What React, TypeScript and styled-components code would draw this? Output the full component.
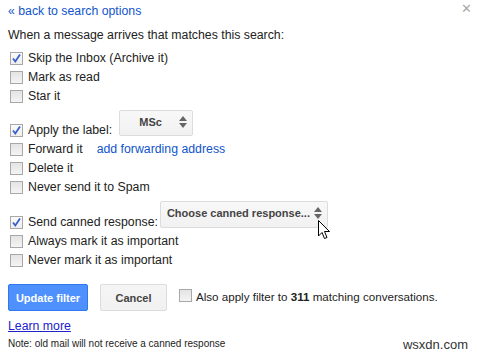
import React from 'react'
import styled, { createGlobalStyle } from 'styled-components'

const GlobalStyle = createGlobalStyle`
  html, body {
    margin: 0;
    padding: 0;
    background: #fff;
  }
  body {
    font-family: "Liberation Sans", Arial, sans-serif;
    font-size: 12.3px;
    color: #222;
  }
`

const Panel = styled.div`
  position: relative;
  width: 480px;
  height: 356px;
  padding: 0 8px;
  box-sizing: border-box;
  overflow: hidden;
`

const Close = styled.div`
  position: absolute;
  top: 2px;
  right: 8px;
  font-size: 13px;
  color: #aaa;
  line-height: 13px;
`

const BackLink = styled.a`
  display: block;
  color: #1155cc;
  text-decoration: none;
  line-height: 19px;
  margin-top: 2px;
`

const Intro = styled.div`
  line-height: 19px;
  margin-top: 5px;
  margin-bottom: 4px;
`

const Row = styled.div<{ $tall?: number }>`
  display: flex;
  align-items: flex-end;
  height: ${p => p.$tall || 19}px;
  line-height: 19px;
  white-space: nowrap;
`

const Box = styled.span<{ $checked?: boolean }>`
  position: relative;
  width: 11px;
  height: 11px;
  border: 1px solid #a8a8a8;
  background: ${p => (p.$checked ? 'linear-gradient(#fafafa, #eee)' : 'linear-gradient(#e4e4e4, #f4f4f4)')};
  margin: 0 5px 3px 2px;
  flex: none;
`

const Tick = styled.svg`
  position: absolute;
  left: 0;
  top: 0;
`

const Label = styled.span``

const Link = styled.a`
  color: #1155cc;
  text-decoration: none;
  margin-left: 14px;
`

const Select = styled.div<{ $w: number; $h: number; $mb: number; $ml: number }>`
  position: relative;
  width: ${p => p.$w}px;
  height: ${p => p.$h}px;
  margin-left: ${p => p.$ml}px;
  margin-bottom: ${p => p.$mb}px;
  box-sizing: border-box;
  border: 1px solid #dcdcdc;
  border-radius: 2px;
  background: linear-gradient(#f8f8f8, #f1f1f1);
  font-size: 11px;
  font-weight: bold;
  color: #444;
  line-height: 11px;
  white-space: nowrap;
  display: flex;
  align-items: flex-start;
`

const SelectText = styled.span<{ $center?: boolean }>`
  flex: 1;
  padding: 6px 0 0 6px;
  text-align: ${p => (p.$center ? 'center' : 'left')};
`

const Arrows = styled.svg`
  flex: none;
  margin: 5px 5px 0 4px;
`

const Buttons = styled.div`
  display: flex;
  align-items: center;
  margin-top: 14px;
  height: 27px;
`

const PrimaryButton = styled.button`
  height: 27px;
  width: 80px;
  border: 1px solid #3079ed;
  border-radius: 2px;
  background: #4d90fe;
  color: #fff;
  font-family: "Liberation Sans", Arial, sans-serif;
  font-size: 11px;
  font-weight: bold;
  padding: 0;
`

const SecondaryButton = styled.button`
  height: 27px;
  width: 67px;
  margin-left: 12px;
  border: 1px solid #dcdcdc;
  border-radius: 2px;
  background: linear-gradient(#f5f5f5, #f1f1f1);
  color: #444;
  font-family: "Liberation Sans", Arial, sans-serif;
  font-size: 11px;
  font-weight: bold;
  padding: 0;
`

const ApplyAll = styled.div`
  display: flex;
  align-items: center;
  margin-left: 10px;
  margin-top: -2px;
  line-height: 19px;
  font-size: 11.6px;
  white-space: nowrap;
  & > span:first-child {
    margin-right: 4px;
  }
`

const LearnMore = styled.a`
  display: block;
  color: #2222cc;
  text-decoration: underline;
  line-height: 19px;
  margin-top: 6px;
  width: max-content;
`

const Note = styled.div`
  font-size: 10px;
  line-height: 14px;
  margin-top: 1px;
  color: #222;
`

const Watermark = styled.div`
  position: absolute;
  right: 12px;
  bottom: 4px;
  font-size: 13px;
  color: #333;
`

const Pointer = styled.svg`
  position: absolute;
  left: 318px;
  top: 220px;
`

const Check = ({ checked }: { checked?: boolean }) => (
  <Box $checked={checked}>
    {checked && (
      <Tick width="11" height="11" viewBox="0 0 11 11">
        <path d="M2 5.5 L4.3 8.5 L9 1.5" fill="none" stroke="#3b5fc9" strokeWidth="1.8" />
      </Tick>
    )}
  </Box>
)

const UpDown = () => (
  <Arrows width="8" height="12" viewBox="0 0 8 12">
    <path d="M0 5 L4 0 L8 5 Z M0 7 L4 12 L8 7 Z" fill="#666" />
  </Arrows>
)

export default function App() {
  return (
    <>
      <GlobalStyle />
      <Panel>
        <Close>✕</Close>
        <BackLink>« back to search options</BackLink>
        <Intro>When a message arrives that matches this search:</Intro>
        <Row><Check checked /><Label>Skip the Inbox (Archive it)</Label></Row>
        <Row><Check /><Label>Mark as read</Label></Row>
        <Row><Check /><Label>Star it</Label></Row>
        <Row $tall={34}>
          <Check checked /><Label>Apply the label:</Label>
          <Select $w={74} $h={26} $mb={4} $ml={7}>
            <SelectText $center>MSc</SelectText>
            <UpDown />
          </Select>
        </Row>
        <Row><Check /><Label>Forward it</Label><Link>add forwarding address</Link></Row>
        <Row><Check /><Label>Delete it</Label></Row>
        <Row><Check /><Label>Never send it to Spam</Label></Row>
        <Row $tall={35}>
          <Check checked /><Label>Send canned response:</Label>
          <Select $w={168} $h={27} $mb={4} $ml={2}>
            <SelectText>Choose canned response...</SelectText>
            <UpDown />
          </Select>
        </Row>
        <Row><Check /><Label>Always mark it as important</Label></Row>
        <Row><Check /><Label>Never mark it as important</Label></Row>
        <Buttons>
          <PrimaryButton>Update filter</PrimaryButton>
          <SecondaryButton>Cancel</SecondaryButton>
          <ApplyAll>
            <Check />
            <Label>Also apply filter to <b>311</b> matching conversations.</Label>
          </ApplyAll>
        </Buttons>
        <LearnMore>Learn more</LearnMore>
        <Note>Note: old mail will not receive a canned response</Note>
        <Watermark>wsxdn.com</Watermark>
        <Pointer width="13" height="21" viewBox="0 0 13 21">
          <path d="M0.5 0.5 L0.5 16 L4 12.5 L6.5 18.5 L9 17.5 L6.5 11.5 L11.5 11.5 Z" fill="#fff" stroke="#000" strokeWidth="1" />
        </Pointer>
      </Panel>
    </>
  )
}
